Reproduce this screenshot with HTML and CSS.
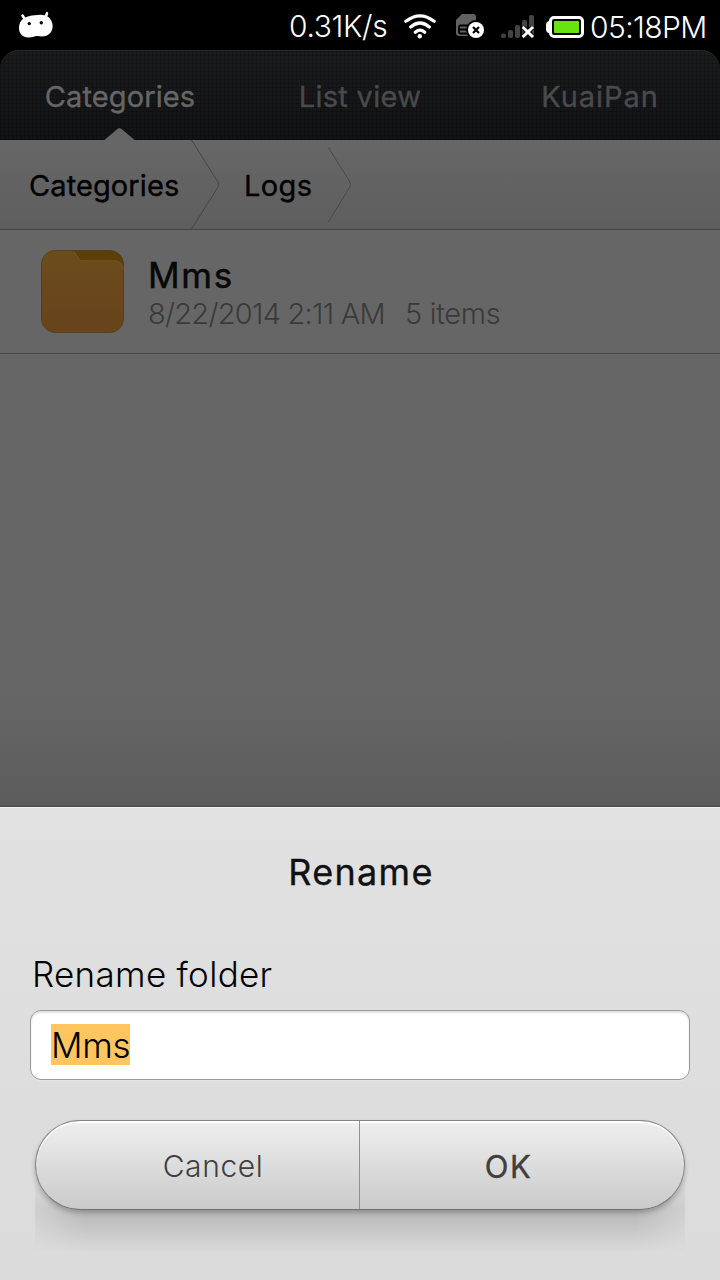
FILE: index.html
```html
<!DOCTYPE html>
<html lang="en">
<head>
<meta charset="utf-8">
<title>Rename</title>
<link rel="stylesheet" href="styles.css">
</head>
<body>
<div class="screen">
  <header class="status">
    <svg class="bot" width="36" height="28" viewBox="0 0 36 28">
      <path d="M4.500 4.500 7 8.500M29 2.200 27.300 7" stroke="#fff" stroke-width="2.600" stroke-linecap="round"/>
      <path d="M17 4.300C23 3 28 3.500 31.500 7c3.500 4 4.500 11 .8 15-3 3.500-8 4-12.300 3-3-.500-5 1.700-10 1.500C5 26.500 1.200 23 1 17.500.8 8.500 8 4.500 17 4.300Z" fill="#fff"/>
      <circle cx="11.300" cy="12.600" r="1.700"/><circle cx="23.300" cy="11.700" r="1.700"/>
    </svg>
    <span class="speed">0.31K/s</span>
    <svg class="wifi" width="32" height="25" viewBox="0 0 32 25" fill="none" stroke="#fff" stroke-width="3.200" stroke-linecap="round">
      <path d="M1.900 7.300Q16-3.700 30.100 7.300M6.700 13Q16 5 25.300 13M11.300 18.200Q16 14.200 20.700 18.200"/>
      <circle cx="15.800" cy="22.200" r="2.200" fill="#fff" stroke="none"/>
    </svg>
    <svg class="sim" width="28" height="25" viewBox="0 0 28 25">
      <path d="M6 0H17Q20 0 20 3V22H3Q0 22 0 19V6Z" fill="#616161"/>
      <path d="M12 11.500H4.500Q3 11.500 3 13V18Q3 19.500 4.500 19.500H12M3 15.500H12" fill="none" stroke="#000" stroke-width="1.800"/>
      <circle cx="20" cy="16" r="10"/><circle cx="20" cy="16" r="8" fill="#fff"/>
      <path d="m17 13 6 6m0-6-6 6" stroke="#000" stroke-width="2.200"/>
    </svg>
    <svg class="signal" width="34" height="26" viewBox="0 0 34 26">
      <g fill="#444"><rect y="18.500" width="5" height="4.500" rx="2"/><rect x="7" y="15" width="5" height="8" rx="2"/><rect x="14" y="10" width="5" height="13" rx="2"/><rect x="21" y="5" width="5" height="18" rx="2"/><rect x="28" width="5" height="23" rx="2"/></g>
      <path d="m22 12.500 9.500 9m0-9-9.500 9" stroke="#000" stroke-width="5"/>
      <path d="m21.700 12 10.300 10m0-10-10.300 10" stroke="#fff" stroke-width="3"/>
    </svg>
    <svg class="battery" width="38" height="22" viewBox="0 0 38 22">
      <path d="M5 5H2.500Q0 6 0 8.500V13.500Q0 16 2.500 17H5Z" fill="#fff"/>
      <rect x="4.500" y="1.500" width="32" height="19" rx="3.500" fill="#000" stroke="#fff" stroke-width="3"/>
      <rect x="8" y="5" width="25" height="12" rx="1" fill="#66e311"/>
    </svg>
    <span class="clock">05:18PM</span>
  </header>

  <nav class="tabs">
    <span class="tab tab-active"><span class="t-cat">Categories</span></span>
    <span class="tab"><span class="t-list">List view</span></span>
    <span class="tab"><span class="t-kuai">KuaiPan</span></span>
  </nav>

  <div class="crumbs">
    <span class="crumb c-cat">Categories</span>
    <svg class="chev-a" width="30" height="89" viewBox="0 0 30 89" fill="none" stroke="#444"><path d="M.5 0 27 42Q28 44.500 27 47L.5 89"/></svg>
    <span class="crumb c-logs">Logs</span>
    <svg class="chev-b" width="26" height="76" viewBox="0 0 26 76" fill="none" stroke="#4a4a4a"><path d="M0 0 22 35Q23 37.500 22 40L0 75.500"/></svg>
  </div>

  <main class="files">
    <div class="file">
      <svg class="folder" width="83" height="83" viewBox="0 0 84 84">
        <defs>
          <linearGradient id="face" x2="0" y2="1"><stop stop-color="#6b4c1c"/><stop offset="1" stop-color="#68431c"/></linearGradient>
        </defs>
        <rect x=".5" y=".5" width="83" height="83" rx="14" fill="#5b3e08" stroke="#50401f"/>
        <path d="M1 15Q1 1 15 1H32Q35 2 36.500 6L38 9Q39 11 42 11H74Q83 11 83 20V69Q83 83 69 83H15Q1 83 1 69Z" fill="url(#face)"/>
        <path d="M33 2Q35 3 36.500 6L38 9Q39 11 42 11H74Q83 11 83 20" fill="none" stroke="#79571e"/>
      </svg>
      <div class="info">
        <div class="name">Mms</div>
        <div class="meta"><span class="date">8/22/2014 2:11 AM</span><span class="count">5 items</span></div>
      </div>
    </div>
  </main>

  <section class="dialog">
    <h1 class="title"><span class="title-text">Rename</span></h1>
    <label class="label">Rename folder</label>
    <div class="field"><span class="selected">Mms</span></div>
    <div class="actions">
      <div class="pill">
        <span class="btn cancel"><span class="cancel-text">Cancel</span></span>
        <span class="btn ok"><span class="ok-text">OK</span></span>
      </div>
    </div>
  </section>
</div>
</body>
</html>
```

FILE: styles.css
```css
* { box-sizing: border-box; }
body { margin: 0; background: #000; font-family: Inter, "Liberation Sans", sans-serif; }
svg { display: block; flex: none; }
.screen { width: 720px; height: 1280px; display: flex; flex-direction: column; overflow: hidden; white-space: nowrap; }

.status { height: 50px; flex: none; display: flex; align-items: flex-start; color: #fff; font-size: 30px; font-weight: 300; line-height: 50px; background: #000; }
.bot { margin: 11px 0 0 18px; }
.speed { width: 98px; margin: 1px 0 0 235px; letter-spacing: -.35px; }
.wifi { margin: 14px 0 0 17px; }
.sim { margin: 14px 0 0 20px; }
.signal { margin: 15px 0 0 17px; }
.battery { margin: 16px 0 0 11px; }
.clock { margin: 2px 0 0 6px; letter-spacing: -.6px; }

.tabs {
  height: 90px; flex: none; display: grid; grid-template-columns: 240px 240px 240px;
  border-radius: 19px 19px 0 0; border-top: 1px solid #292a2b;
  background:
    repeating-linear-gradient(90deg, rgba(0,0,0,.16) 0 1px, transparent 1px 4px),
    repeating-linear-gradient(rgba(0,0,0,.22) 0 1px, transparent 1px 4px),
    linear-gradient(#1b1c1e, #121316);
}
.tab { position: relative; display: flex; justify-content: center; font-size: 29px; line-height: 91px; font-weight: 400; -webkit-text-stroke: .35px; color: #494a4c; }
.t-cat { letter-spacing: .1px; }
.t-list { letter-spacing: .3px; }
.t-kuai { letter-spacing: .95px; }
.tab-active { color: #666; }
.tab-active::after { content: ""; position: absolute; left: 102px; bottom: 0; width: 35px; height: 14px; background: #666; clip-path: polygon(0 100%, 45% 6%, 50% 0, 55% 6%, 100% 100%); }

.crumbs { height: 90px; flex: none; display: flex; align-items: flex-start; background: linear-gradient(#676767, #5e5e5e); border-bottom: 1px solid #444; font-size: 29px; line-height: 92px; font-weight: 400; -webkit-text-stroke: .35px; color: #000; }
.c-cat { width: 150px; margin-left: 29px; letter-spacing: .1px; }
.chev-a { margin-left: 12px; }
.c-logs { width: 70px; margin-left: 23px; letter-spacing: .4px; }
.chev-b { margin: 7px 0 0 14px; }

.files { height: 577px; flex: none; background: linear-gradient(#666 0, #666 80%, #5c5c5c 99.600%, #474747 100%); }
.file { height: 124px; display: flex; align-items: flex-start; padding: 20px 0 0 41px; border-bottom: 1px solid #444; box-shadow: 0 1px #6c6c6c; }
.info { margin-left: 24px; }
.name { margin-top: 5px; height: 40px; line-height: 40px; font-size: 35px; font-weight: 400; -webkit-text-stroke: .5px; letter-spacing: 1.700px; color: #080808; }
.meta { display: flex; height: 38px; line-height: 38px; font-size: 29px; font-weight: 300; color: #3a3a3a; letter-spacing: -.3px; }
.date { width: 257px; letter-spacing: -.75px; }

.dialog { flex: 1; padding: 0 30px; border-top: 1px solid #f0f0f0; background: linear-gradient(#e1e1e1, #dbdbdb); }
.title { margin: 0; height: 130px; display: flex; justify-content: center; font-size: 36px; line-height: 129px; font-weight: 400; -webkit-text-stroke: .35px; letter-spacing: 1.300px; color: #111; }
.title-text { margin-left: 2px; }
.label { display: block; height: 72px; padding: 10px 0 0 2px; line-height: 52px; font-size: 35px; font-weight: 300; letter-spacing: .3px; color: #000; }
.field { height: 70px; padding: 13px 20px; border: 1px solid #999; border-radius: 11px; background: #fff; box-shadow: inset 0 2px 2px rgba(0,0,0,.12), 0 1px #e6e6e6; }
.selected { display: block; width: 79px; height: 41px; line-height: 43px; font-size: 35px; font-weight: 300; letter-spacing: -.3px; color: #000; background: #ffc65f; }
.actions { height: 140px; margin: 40px 5px 0; padding-bottom: 51px; background: linear-gradient(90deg, rgba(220,220,220,.65) 1px, transparent 50px, transparent 600px, rgba(220,220,220,.65) 649px), linear-gradient(transparent 0 45px, #b8b8b8 89px, #bdbdbd 98px, #dbdbdb 133px); }
.pill { height: 90px; display: flex; border: 1px solid #858585; border-bottom-color: #717171; border-radius: 45px; background: linear-gradient(#efefef, #cacaca); box-shadow: inset 0 2px #fff, 0 3px 5px rgba(0,0,0,.22); }
.btn { width: 324px; display: flex; justify-content: center; line-height: 91px; font-size: 30px; color: #3f3f3f; }
.cancel { font-weight: 300; padding-left: 31px; border-right: 1px solid #909090; letter-spacing: .6px; }
.ok { font-weight: 400; -webkit-text-stroke: .4px; padding-right: 27px; letter-spacing: 1.500px; font-size: 31px; }
```
